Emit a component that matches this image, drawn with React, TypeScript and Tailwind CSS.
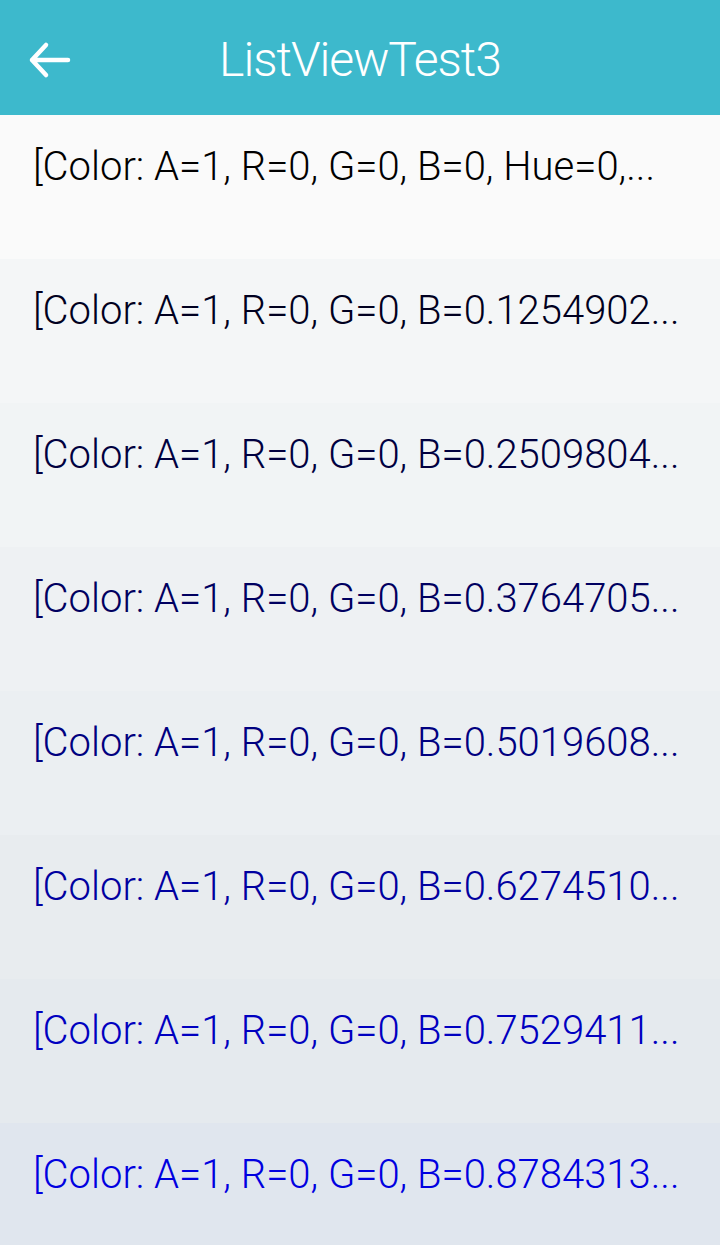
import React from "react";

const rows = [
  { text: "[Color: A=1, R=0, G=0, B=0, Hue=0,...", color: "text-[#000000]", bg: "bg-[#fafafa]" },
  { text: "[Color: A=1, R=0, G=0, B=0.1254902...", color: "text-[#000020]", bg: "bg-[#f4f6f7]" },
  { text: "[Color: A=1, R=0, G=0, B=0.2509804...", color: "text-[#000040]", bg: "bg-[#f1f4f5]" },
  { text: "[Color: A=1, R=0, G=0, B=0.3764705...", color: "text-[#000060]", bg: "bg-[#eef1f3]" },
  { text: "[Color: A=1, R=0, G=0, B=0.5019608...", color: "text-[#000080]", bg: "bg-[#ebeff2]" },
  { text: "[Color: A=1, R=0, G=0, B=0.6274510...", color: "text-[#0000a0]", bg: "bg-[#e8ecef]" },
  { text: "[Color: A=1, R=0, G=0, B=0.7529411...", color: "text-[#0000c0]", bg: "bg-[#e5eaee]" },
  { text: "[Color: A=1, R=0, G=0, B=0.8784313...", color: "text-[#0000e0]", bg: "bg-[#e0e6ee]" },
];

export default function App() {
  return (
    <div className="w-[720px] h-[1245px] overflow-hidden flex flex-col bg-[#e0e6ee]" style={{ fontFamily: "'Roboto', sans-serif" }}>
      <div className="h-[115px] shrink-0 bg-[#3db9cc] relative flex items-center justify-center">
        <svg className="absolute left-[28px] top-[40px]" width="44" height="40" viewBox="0 0 44 40" fill="none">
          <path d="M4 20 H40 M18 5 L4 20 L18 35" stroke="white" strokeWidth="4.5" strokeLinecap="round" strokeLinejoin="round" />
        </svg>
        <span className="text-white text-[48px] font-light tracking-[-1px] leading-none pt-[4px]">
          ListViewTest3
        </span>
      </div>
      {rows.map((r, i) => (
        <div key={i} className={`h-[144px] shrink-0 pl-[33px] pt-[28px] ${r.bg}`}>
          <span className={`text-[40px] font-light leading-[48px] whitespace-nowrap ${r.color}`}>{r.text}</span>
        </div>
      ))}
    </div>
  );
}
